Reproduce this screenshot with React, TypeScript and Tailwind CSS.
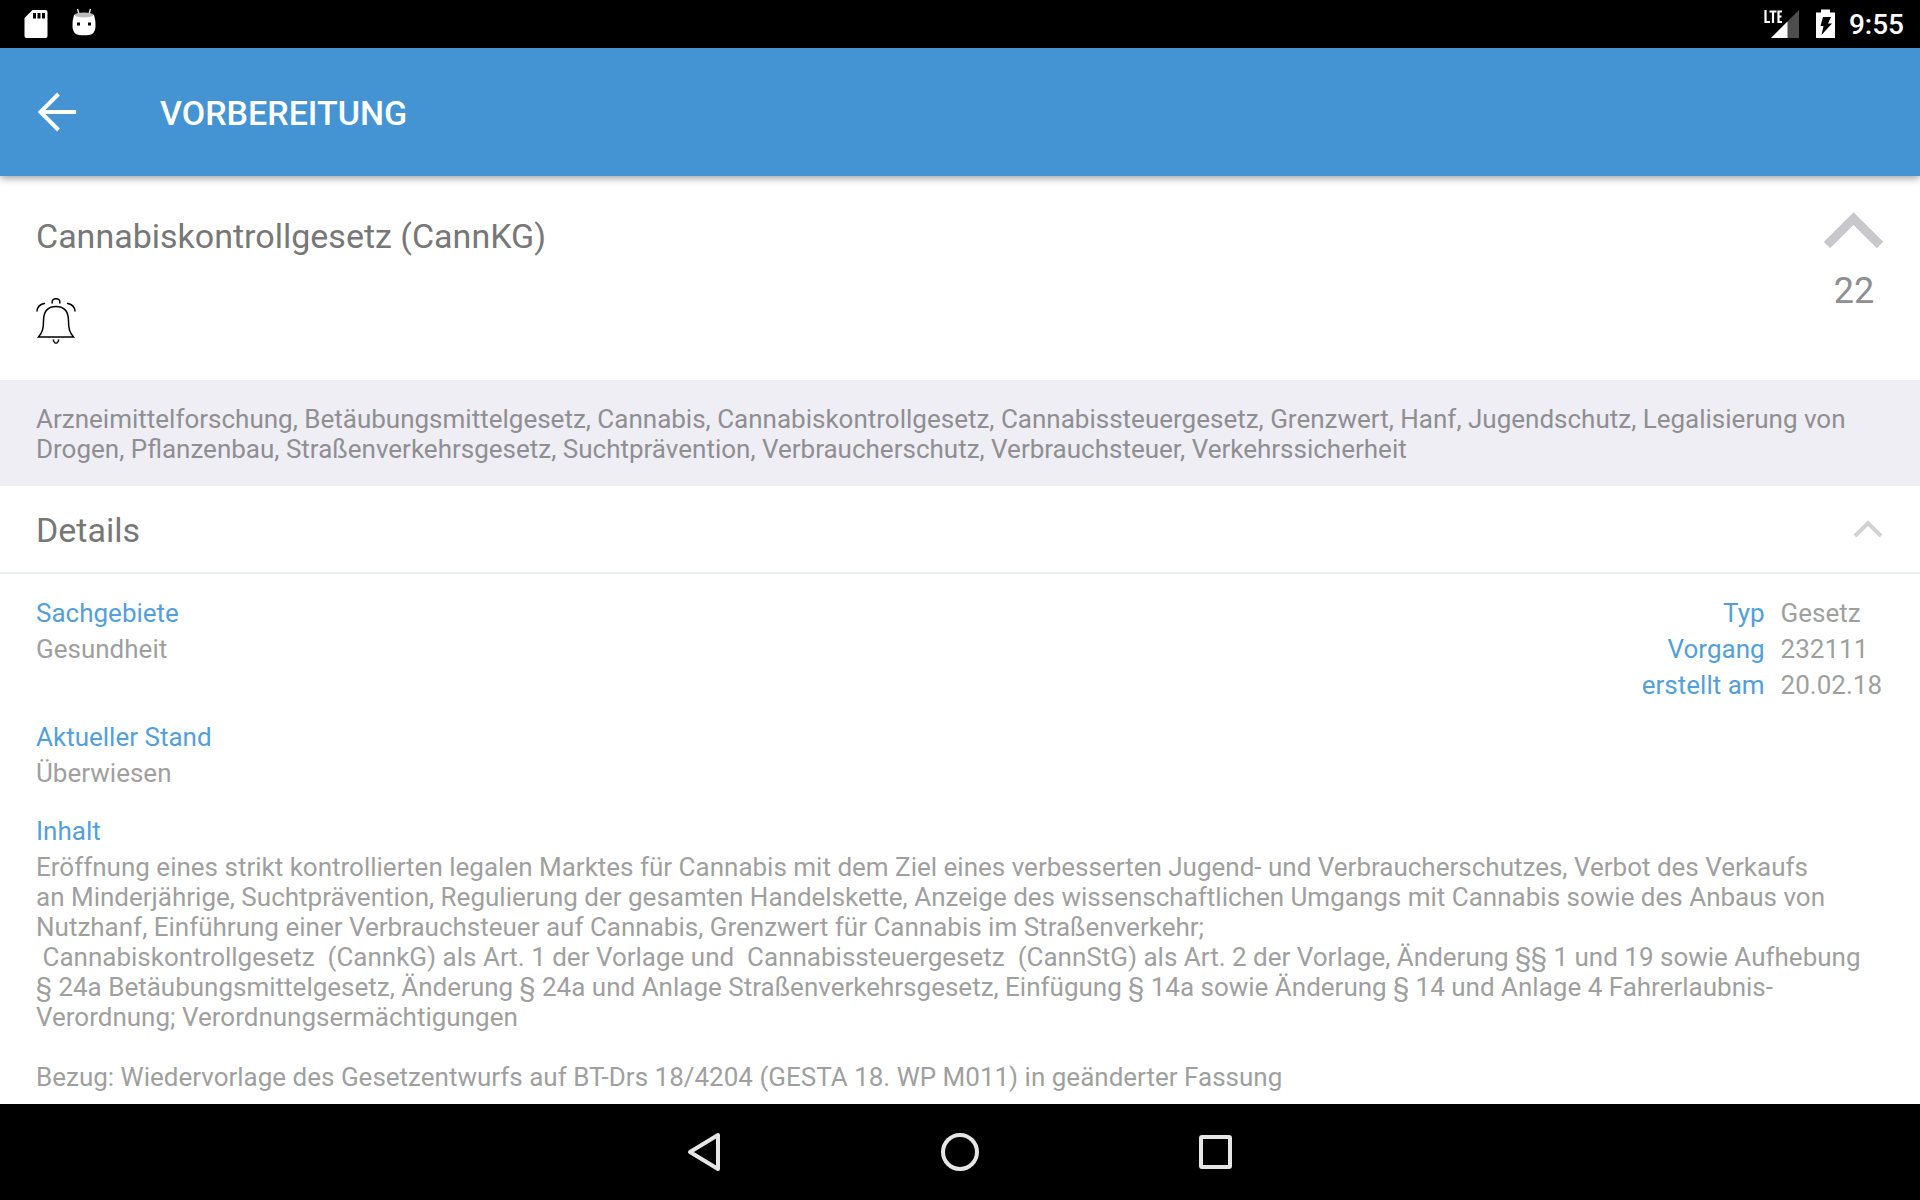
import type { ReactNode } from "react";

const facts = [
  { label: "Typ", value: "Gesetz" },
  { label: "Vorgang", value: "232111" },
  { label: "erstellt am", value: "20.02.18" },
];

const summary =
  "Eröffnung eines strikt kontrollierten legalen Marktes für Cannabis mit dem Ziel eines verbesserten Jugend- und Verbraucherschutzes, Verbot des Verkaufs an\u00a0Minderjährige, Suchtprävention, Regulierung der gesamten Handelskette, Anzeige des wissenschaftlichen Umgangs mit Cannabis sowie des Anbaus von Nutzhanf, Einführung einer Verbrauchsteuer auf Cannabis, Grenzwert für Cannabis im Straßenverkehr;\n Cannabiskontrollgesetz  (CannkG) als Art. 1 der Vorlage und  Cannabissteuergesetz  (CannStG) als Art. 2 der Vorlage, Änderung §§ 1 und 19 sowie Aufhebung §\u00a024a Betäubungsmittelgesetz, Änderung §\u00a024a und Anlage Straßenverkehrsgesetz, Einfügung §\u00a014a sowie Änderung §\u00a014 und Anlage 4 Fahrerlaubnis-Verordnung; Verordnungsermächtigungen\n\nBezug: Wiedervorlage des Gesetzentwurfs auf BT-Drs 18/4204 (GESTA 18. WP M011) in geänderter Fassung";

function StatusBar() {
  return (
    <div className="flex h-12 shrink-0 items-center justify-between bg-black pr-4 pl-6 text-white">
      <div className="flex items-center gap-6">
        <svg className="h-12 w-6" viewBox="0 0 24 48" aria-label="SD-Karte">
          <path d="M8.5 10H21.5Q23.5 10 23.5 12V36Q23.5 38 21.5 38H2.5Q.5 38 .5 36V18Z" fill="#fff" />
          <path d="M9 13h3v5.500H9zM13.500 13h3v5.500h-3zM18 13h3v5.500h-3z" fill="#000" />
        </svg>
        <svg className="h-12 w-6" viewBox="0 0 24 48" aria-label="Android">
          <path d="M5.500 9l1.500 5M18.500 9L17 14" stroke="#ddd" strokeWidth="1.500" />
          <path d="M2 15Q12 11 22 15Q24 21 23.500 27Q23 34 17 35Q12 35.600 7 35Q1 34 .5 27Q0 21 2 15Z" fill="#fff" />
          <ellipse cx="12" cy="15" rx="9.500" ry="2.500" fill="#bdbdbd" />
          <path d="M5 22.500h3v3H5zM16 22.500h3v3h-3z" fill="#000" />
        </svg>
      </div>
      <div className="flex items-center">
        <svg className="h-12 w-9" viewBox="0 0 36 48" aria-label="LTE">
          <path d="M36 10V38H8Z" fill="#4d4d4d" />
          <path d="M24.500 21.500V38H8Z" fill="#fff" />
          <path d="M2.500 10V22H7M6.500 11.500H13.500M10 11.500V23M19 11.500H15.500V22H19M15.500 16.500H18.500" fill="none" stroke="#fff" strokeWidth="2.200" />
        </svg>
        <svg className="ml-4 h-12 w-5" viewBox="0 0 20 48" aria-label="Akku lädt">
          <path d="M6 9.500H15V12.500H20V38H1V12.500H6Z" fill="#fff" />
          <path d="M8 17h8l-3 6.500h4L6.500 35l2-9H5.500Z" fill="#000" />
        </svg>
        <span className="ml-3.5 pt-0.5 text-[28px] leading-8 font-medium">9:55</span>
      </div>
    </div>
  );
}

function Header() {
  return (
    <header className="z-10 flex h-32 shrink-0 items-center bg-[#4493d3] shadow-[0_2px_8px_rgba(0,0,0,0.4)]">
      <button type="button" aria-label="Zurück" className="ml-9 mr-20 block">
        <svg className="size-11" viewBox="0 0 44 44">
          <path d="M40 22H5M22.500 4L4.500 22L22.500 40" fill="none" stroke="#fff" strokeWidth="4" />
        </svg>
      </button>
      <h1 className="pt-0.5 text-[34px] leading-10 font-medium text-white">VORBEREITUNG</h1>
    </header>
  );
}

function Field({ label, children }: { label: string; children: ReactNode }) {
  return (
    <section>
      <h3 className="leading-9 text-[#549fdb]">{label}</h3>
      {children}
    </section>
  );
}

export default function App() {
  return (
    <div className="flex h-screen flex-col overflow-hidden bg-white font-[Roboto,sans-serif] text-[26px] text-[#9f9f9f]">
      <StatusBar />
      <Header />
      <main className="min-h-0 flex-1 overflow-hidden">
        <section className="flex justify-between px-9 pt-9 pb-8">
          <div>
            <h2 className="text-[34px] leading-12 text-[#777777]">Cannabiskontrollgesetz (CannKG)</h2>
            <button type="button" aria-label="Benachrichtigen" className="mt-9 block">
              <svg className="h-13 w-10" viewBox="0 0 40 52" fill="none" stroke="#000" strokeWidth="1.500">
                <path d="M2.500 41C6.500 36 7.500 33 7.500 25C7.500 15 12 10.500 20 10.500S32.500 15 32.500 25C32.500 33 33.500 36 37.500 41Z" />
                <path d="M16.200 7.500V6Q16.200 2.800 20 2.800T23.800 6V7.500M17.500 43.500V45Q20 49.500 22.500 45V43.500" />
                <path d="M.9 15.500Q1.500 8.500 9 7.300M39.100 15.500Q38.500 8.500 31 7.300" />
              </svg>
            </button>
          </div>
          <button type="button" className="flex flex-col items-center" aria-label="Stimme abgeben, 22 Stimmen">
            <svg className="h-9 w-15" viewBox="0 0 60 36">
              <path d="M3 33L29.500 6.500L56 33" fill="none" stroke="#c7c7cc" strokeWidth="9" />
            </svg>
            <span className="mt-[21px] text-[36px] leading-11 text-[#8e8e93]">22</span>
          </button>
        </section>
        <p className="bg-[#efeef4] px-9 pt-6 pb-[22px] leading-[30px] text-[#8e8e93]">
          Arzneimittelforschung, Betäubungsmittelgesetz, Cannabis, Cannabiskontrollgesetz, Cannabissteuergesetz, Grenzwert, Hanf, Jugendschutz, Legalisierung von Drogen, Pflanzenbau, Straßenverkehrsgesetz, Suchtprävention, Verbraucherschutz, Verbrauchsteuer, Verkehrssicherheit
        </p>
        <button type="button" aria-expanded="true" className="flex h-22 w-full items-center justify-between border-b-2 border-[#e9f1f9] px-9 text-left">
          <span className="pt-0.5 text-[34px] leading-12 text-[#777777]">Details</span>
          <svg className="h-5 w-8" viewBox="0 0 32 20">
            <path d="M3 17L16 4L29 17" fill="none" stroke="#d1d1d6" strokeWidth="4" />
          </svg>
        </button>
        <div className="flex flex-col px-9 pt-[21px]">
          <div className="flex justify-between">
            <Field label="Sachgebiete">
              <p className="leading-9">Gesundheit</p>
            </Field>
            <dl className="grid grid-cols-[auto_auto] gap-x-4 pr-0.5 leading-9">
              {facts.map((fact) => (
                <div key={fact.label} className="contents">
                  <dt className="text-right text-[#549fdb]">{fact.label}</dt>
                  <dd>{fact.value}</dd>
                </div>
              ))}
            </dl>
          </div>
          <div className="mt-4">
            <Field label="Aktueller Stand">
              <p className="leading-9">Überwiesen</p>
            </Field>
          </div>
          <div className="mt-[22px]">
            <Field label="Inhalt">
              <p className="pt-[3px] leading-[30px] whitespace-pre-wrap">{summary}</p>
            </Field>
          </div>
        </div>
      </main>
      <nav className="flex h-24 shrink-0 items-center justify-center gap-[212px] bg-black">
        <button type="button" aria-label="Zurück">
          <svg className="size-11" viewBox="0 0 44 44">
            <path d="M36 5V39L8 22Z" fill="none" stroke="#e6e6e6" strokeWidth="4" strokeLinejoin="round" />
          </svg>
        </button>
        <button type="button" aria-label="Startbildschirm">
          <svg className="size-11" viewBox="0 0 44 44">
            <circle cx="22" cy="22" r="17" fill="none" stroke="#e6e6e6" strokeWidth="4" />
          </svg>
        </button>
        <button type="button" aria-label="Letzte Apps">
          <svg className="size-11" viewBox="0 0 44 44">
            <rect x="7" y="7" width="29" height="30" rx="1" fill="none" stroke="#e6e6e6" strokeWidth="4" />
          </svg>
        </button>
      </nav>
    </div>
  );
}
